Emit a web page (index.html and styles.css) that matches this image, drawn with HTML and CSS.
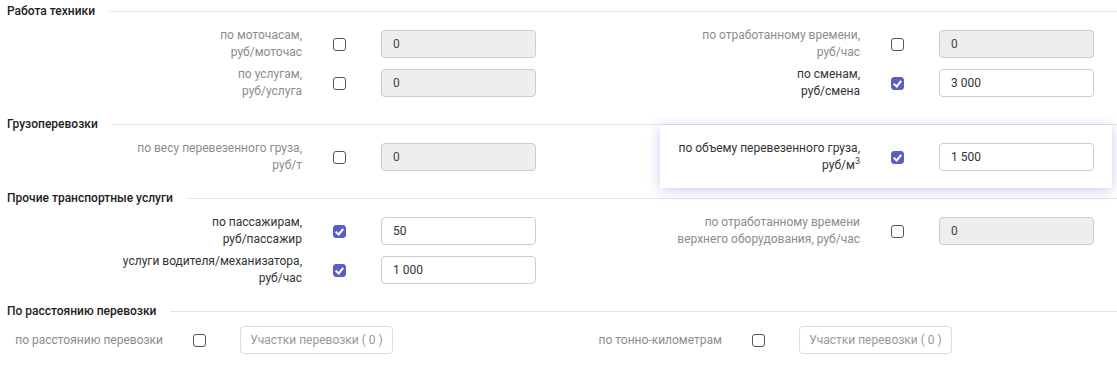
FILE: index.html
```html
<!DOCTYPE html>
<html>
<head>
    <title>Тарифы</title>
    <link rel="stylesheet" href="styles.css">
</head>
<body>
    <div class="section">
        <div class="section-head"><span>Работа техники</span></div>
        <div class="rows">
            <div class="row">
                <div class="lbl">по моточасам,<br>руб/моточас</div>
                <span class="cb"></span>
                <input class="field" value="0" disabled>
            </div>
            <div class="row">
                <div class="lbl">по отработанному времени,<br>руб/час</div>
                <span class="cb"></span>
                <input class="field" value="0" disabled>
            </div>
            <div class="row">
                <div class="lbl">по услугам,<br>руб/услуга</div>
                <span class="cb"></span>
                <input class="field" value="0" disabled>
            </div>
            <div class="row">
                <div class="lbl on">по сменам,<br>руб/смена</div>
                <span class="cb checked"></span>
                <input class="field" value="3 000">
            </div>
        </div>
    </div>

    <div class="section">
        <div class="section-head"><span>Грузоперевозки</span></div>
        <div class="rows">
            <div class="row">
                <div class="lbl">по весу перевезенного груза,<br>руб/т</div>
                <span class="cb"></span>
                <input class="field" value="0" disabled>
            </div>
            <div class="row hover">
                <div class="lbl on">по объему перевезенного груза,<br>руб/м<sup>3</sup></div>
                <span class="cb checked"></span>
                <input class="field" value="1 500">
            </div>
        </div>
    </div>

    <div class="section">
        <div class="section-head"><span>Прочие транспортные услуги</span></div>
        <div class="rows">
            <div class="row">
                <div class="lbl on">по пассажирам,<br>руб/пассажир</div>
                <span class="cb checked"></span>
                <input class="field" value="50">
            </div>
            <div class="row">
                <div class="lbl">по отработанному времени<br>верхнего оборудования, руб/час</div>
                <span class="cb"></span>
                <input class="field" value="0" disabled>
            </div>
            <div class="row">
                <div class="lbl on">услуги водителя/механизатора,<br>руб/час</div>
                <span class="cb checked"></span>
                <input class="field" value="1 000">
            </div>
        </div>
    </div>

    <div class="section">
        <div class="section-head"><span>По расстоянию перевозки</span></div>
        <div class="rows">
            <div class="row short">
                <div class="lbl">по расстоянию перевозки</div>
                <span class="cb"></span>
                <button class="parts">Участки перевозки ( 0 )</button>
            </div>
            <div class="row short">
                <div class="lbl">по тонно-километрам</div>
                <span class="cb"></span>
                <button class="parts">Участки перевозки ( 0 )</button>
            </div>
        </div>
    </div>
</body>
</html>
```

FILE: styles.css
```css
body { margin: 0; font-family: Roboto, "Liberation Sans", sans-serif; font-size: 12px; color: #333; background: #fff; }
.section { margin-bottom: 12px; }
.section-head { display: flex; align-items: center; height: 22px; padding-left: 7px; font-weight: 500; color: #222; }
.section-head::after { content: ""; flex: 1; height: 1px; background: #e4e4e4; margin-left: 14px; }
.rows { display: grid; grid-template-columns: 559px 558px; row-gap: 3px; margin-top: 4px; }
.row { display: flex; align-items: center; height: 36px; padding-right: 23px; }
.lbl { flex: 1; text-align: right; line-height: 17px; color: #8c8c8c; }
.lbl.on { color: #333; }
.lbl sup { font-size: 9px; line-height: 0; vertical-align: 5px; }
.cb { width: 11px; height: 11px; border: 1px solid #555; border-radius: 3px; margin: 0 35px 0 31px; flex: none; position: relative; }
.cb.checked { background: #5b5ec6; border-color: #5b5ec6; }
.cb.checked::after { content: ""; position: absolute; left: 3px; top: 1px; width: 3px; height: 6px; border: solid #fff; border-width: 0 2px 2px 0; transform: rotate(40deg); }
.field { width: 155px; height: 28px; box-sizing: border-box; border: 1px solid #ccc; border-radius: 4px; padding: 0 11px; font: inherit; color: #333; background: #fff; outline: none; }
.field:disabled { background: #eee; color: #444; }
.row.hover { background: #fff; margin: -14px 5px -13px 101px; padding: 14px 18px 13px 0; box-shadow: 0 2px 12px rgba(70, 90, 210, 0.3); position: relative; z-index: 1; }
.row.short { height: 28px; padding-right: 0; }
.row.short .lbl { flex: none; width: 163px; }
.row.short .cb { margin: 0 34px 0 30px; }
.parts { width: 153px; height: 28px; border: 1px solid #ddd; border-radius: 4px; background: #fff; font: inherit; color: #999; padding: 0; }
```
